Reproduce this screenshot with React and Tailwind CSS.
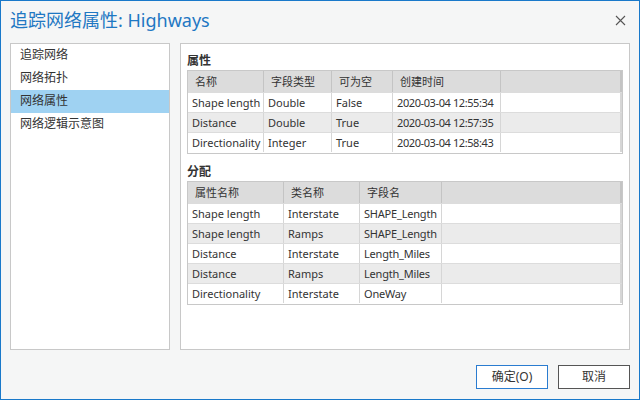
const font = { fontFamily: '"Segoe UI", "Noto Sans", "Noto Sans CJK SC", sans-serif' };

const navItems = ["追踪网络", "网络拓扑", "网络属性", "网络逻辑示意图"];

const attrCols = [
  { label: "名称", w: "w-[76px]" },
  { label: "字段类型", w: "w-[68px]" },
  { label: "可为空", w: "w-[61px]" },
  { label: "创建时间", w: "w-[108px]", cell: "tracking-[-0.4px]" },
];
const attrRows = [
  ["Shape length", "Double", "False", "2020-03-04 12:55:34"],
  ["Distance", "Double", "True", "2020-03-04 12:57:35"],
  ["Directionality", "Integer", "True", "2020-03-04 12:58:43"],
];

const assignCols = [
  { label: "属性名称", w: "w-[96px]" },
  { label: "类名称", w: "w-[76px]" },
  { label: "字段名", w: "w-[82px]", cell: "tracking-[-0.2px]" },
];
const assignRows = [
  ["Shape length", "Interstate", "SHAPE_Length"],
  ["Shape length", "Ramps", "SHAPE_Length"],
  ["Distance", "Interstate", "Length_Miles"],
  ["Distance", "Ramps", "Length_Miles"],
  ["Directionality", "Interstate", "OneWay"],
];

function Grid({ cols, rows }) {
  return (
    <div className="border border-[#c8c8c8] bg-white pb-[1px]">
      <div className="flex h-[21px] bg-[#dcdcdc]">
        {cols.map((c) => (
          <div
            key={c.label}
            className={`${c.w} shrink-0 border-r border-[#c4c4c4] pl-[7px] leading-[21px] whitespace-nowrap`}
          >
            {c.label}
          </div>
        ))}
        <div className="flex-1 border-r-2 border-[#c4c4c4]" />
      </div>
      {rows.map((r, i) => (
        <div
          key={i}
          className={`flex h-[20px] border-t border-[#dcdcdc] ${i % 2 === 1 ? "bg-[#ebebeb]" : "bg-white"}`}
        >
          {r.map((v, j) => (
            <div
              key={j}
              className={`${cols[j].w} ${cols[j].cell || ""} shrink-0 border-r border-[#d6d6d6] pl-[4px] leading-[19px] whitespace-nowrap overflow-hidden`}
            >
              {v}
            </div>
          ))}
          <div className="flex-1 border-r-2 border-[#d6d6d6]" />
        </div>
      ))}
    </div>
  );
}

export default function App() {
  return (
    <div
      className="w-[640px] h-[400px] border border-[#1979ca] bg-[#f5f6f6] flex flex-col text-[#333333]"
      style={font}
    >
      <div className="h-[42px] shrink-0 flex items-center justify-between pl-[9px] pr-[13px] pb-[4px]">
        <span className="text-[18px] text-[#1f78c3] leading-[22px]">追踪网络属性: Highways</span>
        <svg width="11" height="11" viewBox="0 0 11 11">
          <path d="M1 1 L10 10 M10 1 L1 10" stroke="#555" strokeWidth="1.1" />
        </svg>
      </div>

      <div className="h-[307px] shrink-0 flex gap-[10px] px-[9px]">
        <div className="w-[160px] border border-[#c8c8c8] bg-white text-[12px]">
          {navItems.map((t, i) => (
            <div
              key={t}
              className={`h-[23px] pl-[9px] leading-[21px] ${i === 2 ? "bg-[#9fd2f2]" : ""}`}
            >
              {t}
            </div>
          ))}
        </div>

        <div className="flex-1 border border-[#c8c8c8] bg-white px-[6px] text-[11px]">
          <div className="pt-[8px] h-[26px] text-[12px] font-bold leading-[18px]">属性</div>
          <Grid cols={attrCols} rows={attrRows} />
          <div className="pt-[9px] h-[27px] text-[12px] font-bold leading-[18px]">分配</div>
          <Grid cols={assignCols} rows={assignRows} />
        </div>
      </div>

      <div className="flex justify-end gap-[10px] pr-[9px] pt-[15px] text-[12px]">
        <button className="w-[72px] h-[24px] border border-[#2a7cd0] bg-white leading-[22px]">
          确定(O)
        </button>
        <button className="w-[72px] h-[24px] border border-[#555555] bg-white leading-[22px]">
          取消
        </button>
      </div>
    </div>
  );
}
